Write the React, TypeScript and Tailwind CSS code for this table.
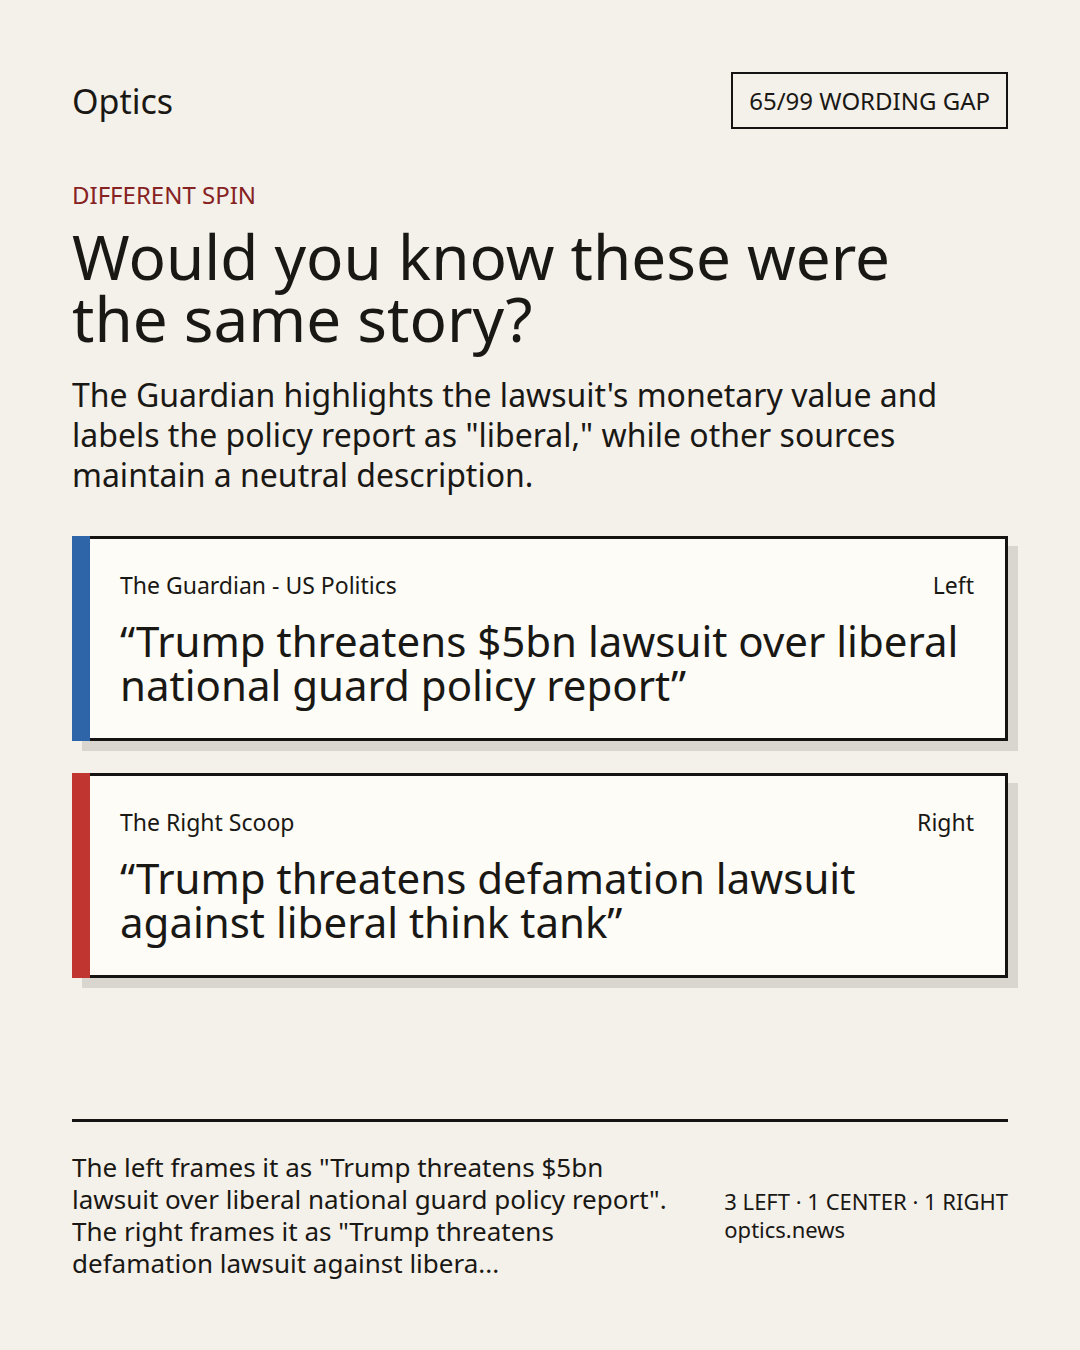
const font = { fontFamily: '"Noto Sans", "Open Sans", sans-serif' }

interface Take {
  source: string
  lean: string
  quote: string
  bar: string
}

const takes: Take[] = [
  {
    source: "The Guardian - US Politics",
    lean: "Left",
    quote: "“Trump threatens $5bn lawsuit over liberal national guard policy report”",
    bar: "bg-[#2e64a8]",
  },
  {
    source: "The Right Scoop",
    lean: "Right",
    quote: "“Trump threatens defamation lawsuit against liberal think tank”",
    bar: "bg-[#c0352f]",
  },
]

function TakeCard({ take }: { take: Take }) {
  return (
    <div className="flex shadow-[10px_10px_0_#d9d6cf]">
      <div className={`w-[18px] shrink-0 ${take.bar}`} />
      <div className="flex-1 bg-[#fdfcf7] border-y-[3px] border-r-[3px] border-[#161412] pl-[30px] pr-[31px] py-[31px]">
        <div className="flex justify-between text-[23px] leading-[30px] text-[#1a1814]">
          <span>{take.source}</span>
          <span>{take.lean}</span>
        </div>
        <p className="mt-[19px] text-[42px] leading-[44px] text-[#1a1814]">{take.quote}</p>
      </div>
    </div>
  )
}

export default function App() {
  return (
    <div
      style={font}
      className="min-h-[1350px] w-[1080px] bg-[#f4f0ea] px-[72px] pt-[72px] pb-[71px] flex flex-col text-[#1a1814]"
    >
      <header className="flex items-center justify-between">
        <span className="text-[34px] leading-[44px]">Optics</span>
        <span className="border-2 border-[#161412] px-[16px] py-[11px] text-[24px] leading-[31px]">
          65/99 WORDING GAP
        </span>
      </header>

      <p className="mt-[50px] text-[24px] leading-[32px] text-[#862222]">DIFFERENT SPIN</p>
      <h1 className="mt-[14px] text-[62px] leading-[62px]">
        Would you know these were
        <br />
        the same story?
      </h1>
      <p className="mt-[26px] text-[32px] leading-[40px]">
        The Guardian highlights the lawsuit's monetary value and labels the policy report as "liberal," while
        other sources maintain a neutral description.
      </p>

      <div className="mt-[41px] flex flex-col gap-8">
        {takes.map((t) => (
          <TakeCard key={t.source} take={t} />
        ))}
      </div>

      <footer className="mt-auto">
        <div className="h-[3px] bg-[#161412]" />
        <div className="mt-[29px] flex items-center gap-12">
          <p className="flex-1 text-[26px] leading-[32px]">
            The left frames it as "Trump threatens $5bn lawsuit over liberal national guard policy report". The
            right frames it as "Trump threatens defamation lawsuit against libera...
          </p>
          <div className="shrink-0 text-[22px] leading-[28px]">
            <div>3 LEFT · 1 CENTER · 1 RIGHT</div>
            <div>optics.news</div>
          </div>
        </div>
      </footer>
    </div>
  )
}
